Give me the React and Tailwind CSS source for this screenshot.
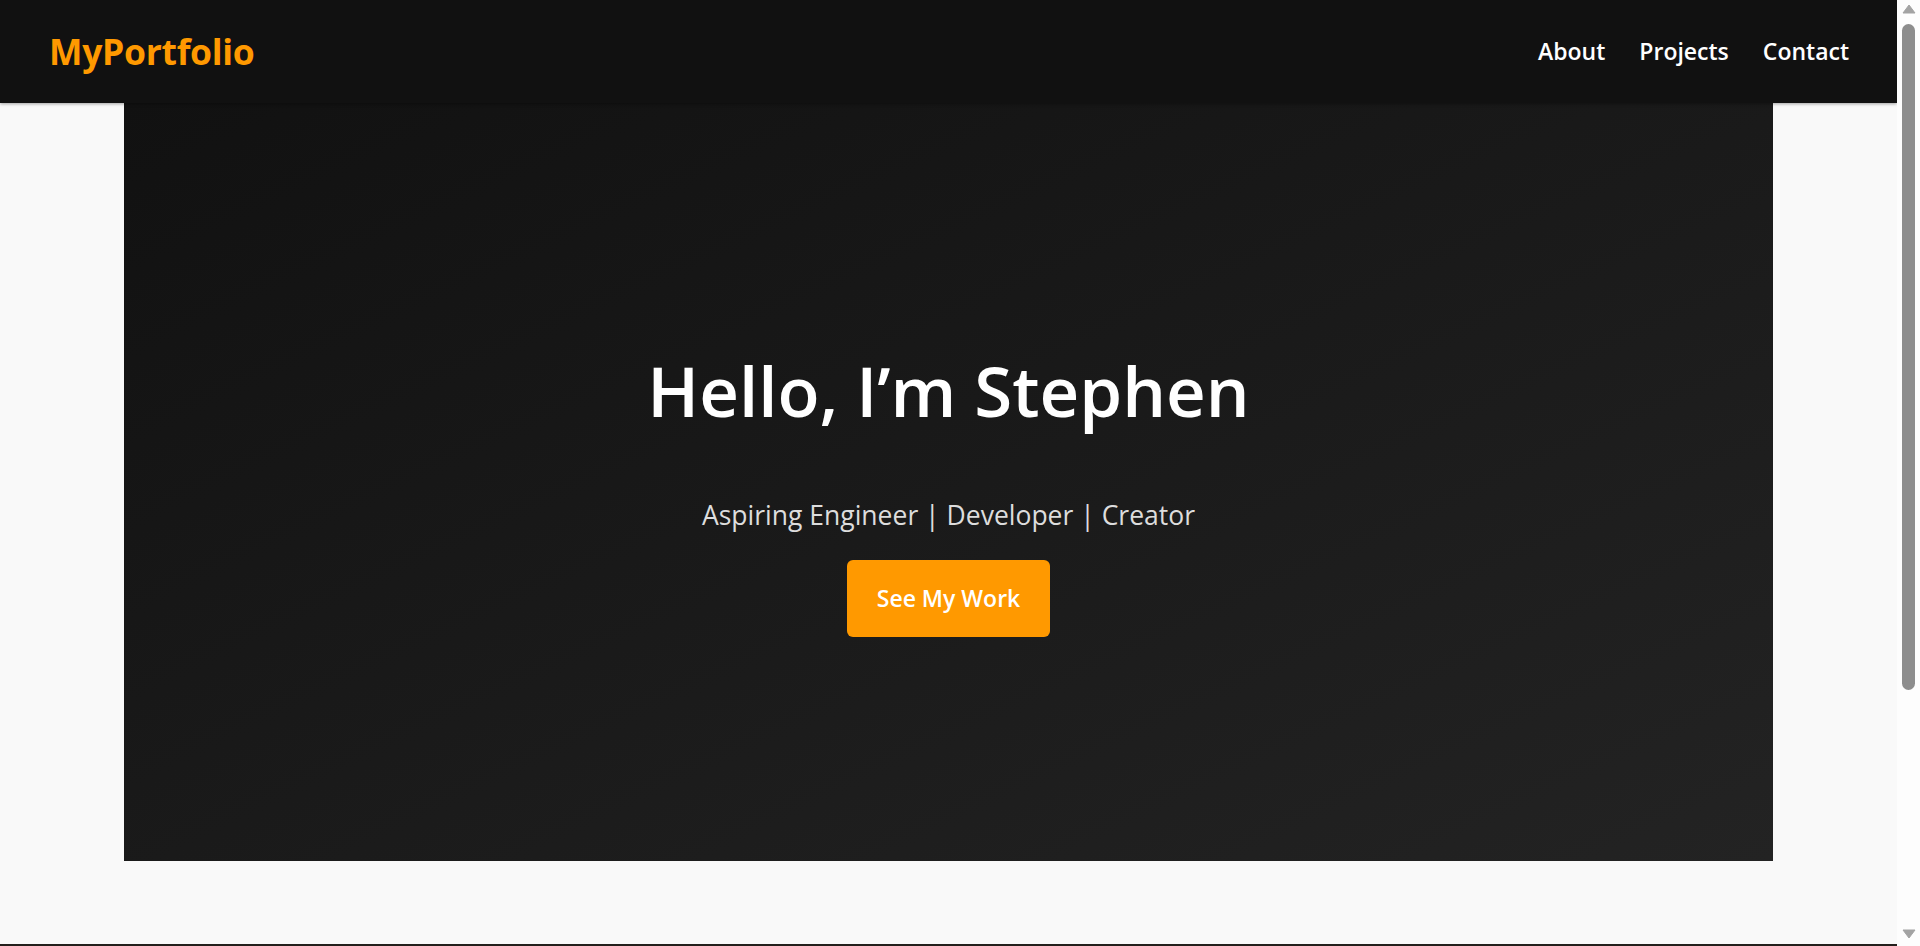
import React from 'react';

function Scrollbar() {
    return (
        <div className="w-[23px] shrink-0 h-screen bg-[#fdfdfd] flex flex-col items-center">
            <svg width="14" height="10" viewBox="0 0 14 10" className="mt-[4px]">
                <path d="M7 1 L13 9 L1 9 Z" fill="#a3a3a3" stroke="#a3a3a3" strokeLinejoin="round" />
            </svg>
            <div className="mt-[10px] w-[13px] h-[666px] rounded-full bg-[#8d8d8d]" />
            <div className="flex-1" />
            <svg width="14" height="10" viewBox="0 0 14 10" className="mb-[7px]">
                <path d="M1 1 L13 1 L7 9 Z" fill="#a3a3a3" stroke="#a3a3a3" strokeLinejoin="round" />
            </svg>
        </div>
    );
}

function Navbar() {
    return (
        <nav className="h-[103px] shrink-0 bg-[#111111] flex items-center justify-between pl-[49px] pr-[48px] shadow-[0_1px_3px_rgba(0,0,0,0.35)] relative z-10">
            <div className="text-[35.5px] font-bold text-[#ff9900] tracking-[-0.3px]">MyPortfolio</div>
            <ul className="flex gap-[34px] text-[23px] font-semibold text-white">
                <li>About</li>
                <li>Projects</li>
                <li>Contact</li>
            </ul>
        </nav>
    );
}

export default function App() {
    return (
        <div className="flex h-screen overflow-hidden bg-[#f9f9f9] font-['Open_Sans',sans-serif]">
            <div className="flex-1 flex flex-col overflow-hidden">
                <Navbar />
                {/* Hero */}
                <section className="mx-[124px] h-[758px] shrink-0 bg-gradient-to-br from-[#111111] to-[#232323] flex flex-col items-center pt-[246px] text-center">
                    <h1 className="text-[69px] font-semibold text-white leading-[1.2]">Hello, I’m Stephen</h1>
                    <p className="mt-[64px] text-[26.5px] text-[#dddddd]">Aspiring Engineer | Developer | Creator</p>
                    <button className="mt-[24px] w-[203px] h-[77px] rounded-[6px] bg-[#ff9900] text-white text-[23px] font-semibold">
                        See My Work
                    </button>
                </section>
                <div className="h-[83px] shrink-0" />
                <section className="flex-1 min-h-[200px] bg-[#231f1c]" />
            </div>
            <Scrollbar />
        </div>
    );
}
